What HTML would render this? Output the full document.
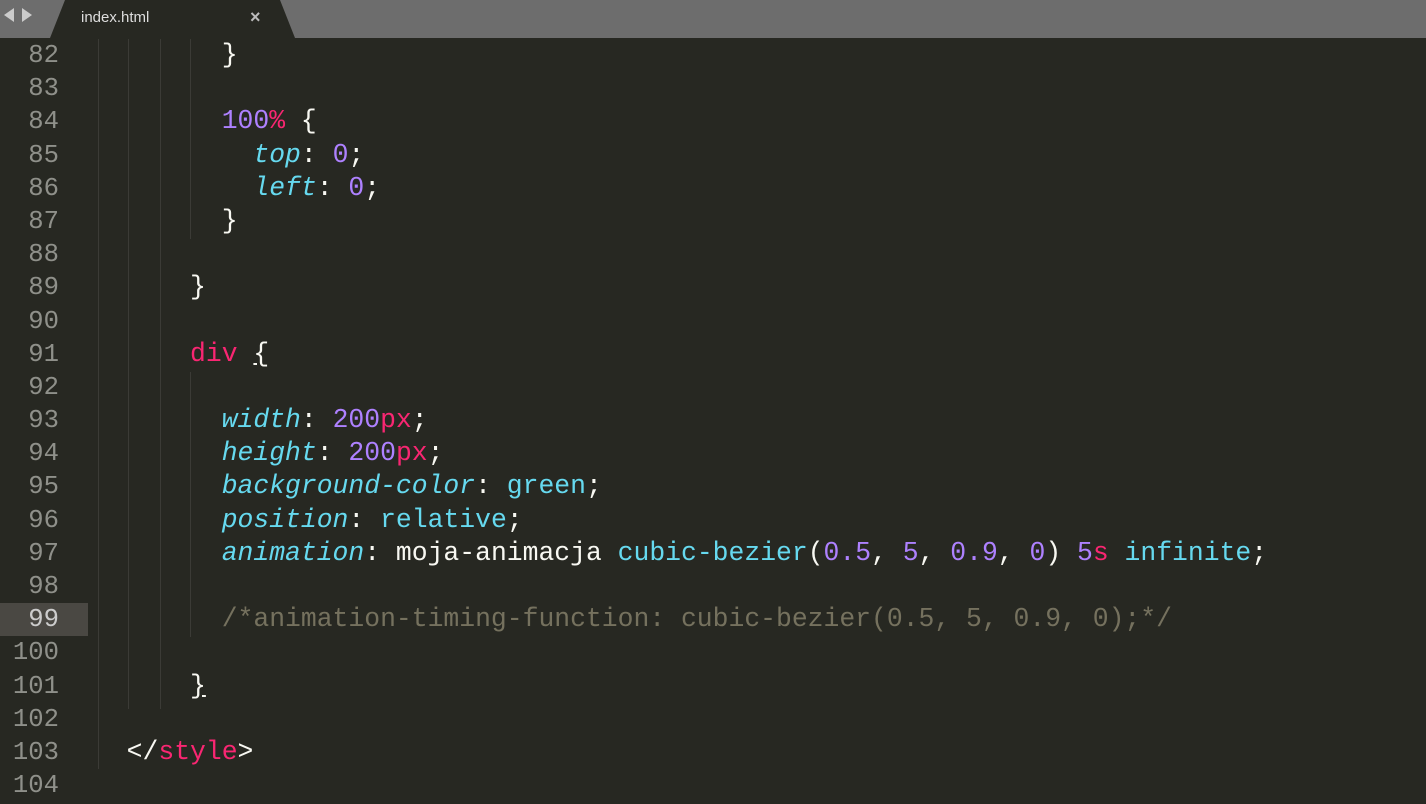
<!DOCTYPE html>
<html><head><style>
html,body{margin:0;padding:0;background:#272822;width:1426px;height:804px;overflow:hidden}
.bar{position:absolute;left:0;top:0;width:1426px;height:38px;background:#6d6d6d}
.tab{position:absolute;left:50px;top:0;width:245px;height:38px;background:#272822;clip-path:polygon(0 100%,15px 0,230px 0,100% 100%)}
.tab span{position:absolute;left:31px;top:9px;font:15px "Liberation Sans",sans-serif;color:#ddd}
.tab b{position:absolute;left:200px;top:7px;font:18px "Liberation Sans",sans-serif;color:#bbb;font-weight:bold}
.arr{position:absolute;top:8px;width:0;height:0;border-top:7px solid transparent;border-bottom:7px solid transparent}
.hl{position:absolute;left:0;top:603px;width:88px;height:33px;background:#4a4843}
.g{position:absolute;top:39px;width:1px;background:#3b3b36}
.code{position:absolute;left:0;top:39px;font-family:"Liberation Mono",monospace;font-size:26.4px;line-height:33.18px;color:#f8f8f2;white-space:pre}
.ln{display:inline-block;width:59px;text-align:right;color:#8f908a;margin-right:36px;font-size:25.6px}
.p{color:#66d9ef;font-style:italic}.c{color:#66d9ef}.n{color:#ae81ff}.k{color:#f92672}.cm{color:#75715e}
</style></head><body>
<div class="bar"></div>
<div class="arr" style="left:4px;border-right:10px solid #ccc"></div>
<div class="arr" style="left:22px;border-left:10px solid #ccc"></div>
<div class="tab"><span>index.html</span><b>×</b></div>
<div class="hl"></div>
<div class="g" style="left:98px;height:730px"></div>
<div class="g" style="left:128px;height:670px"></div>
<div class="g" style="left:160px;height:670px"></div>
<div class="g" style="left:190px;height:200px"></div>
<div class="g" style="left:190px;top:372px;height:265px"></div>
<div class="code"><span class="ln">82</span>        }
<span class="ln">83</span>
<span class="ln">84</span>        <span class="n">100</span><span class="k">%</span> {
<span class="ln">85</span>          <span class="p">top</span>: <span class="n">0</span>;
<span class="ln">86</span>          <span class="p">left</span>: <span class="n">0</span>;
<span class="ln">87</span>        }
<span class="ln">88</span>
<span class="ln">89</span>      }
<span class="ln">90</span>
<span class="ln">91</span>      <span class="k">div</span> <u>{</u>
<span class="ln">92</span>
<span class="ln">93</span>        <span class="p">width</span>: <span class="n">200</span><span class="k">px</span>;
<span class="ln">94</span>        <span class="p">height</span>: <span class="n">200</span><span class="k">px</span>;
<span class="ln">95</span>        <span class="p">background-color</span>: <span class="c">green</span>;
<span class="ln">96</span>        <span class="p">position</span>: <span class="c">relative</span>;
<span class="ln">97</span>        <span class="p">animation</span>: moja-animacja <span class="c">cubic-bezier</span>(<span class="n">0.5</span>, <span class="n">5</span>, <span class="n">0.9</span>, <span class="n">0</span>) <span class="n">5</span><span class="k">s</span> <span class="c">infinite</span>;
<span class="ln">98</span>
<span class="ln" style="color:#ccc">99</span>        <span class="cm">/*animation-timing-function: cubic-bezier(0.5, 5, 0.9, 0);*/</span>
<span class="ln">100</span>
<span class="ln">101</span>      <u>}</u>
<span class="ln">102</span>
<span class="ln">103</span>  &lt;/<span class="k">style</span>&gt;
<span class="ln">104</span></div>
</body></html>
